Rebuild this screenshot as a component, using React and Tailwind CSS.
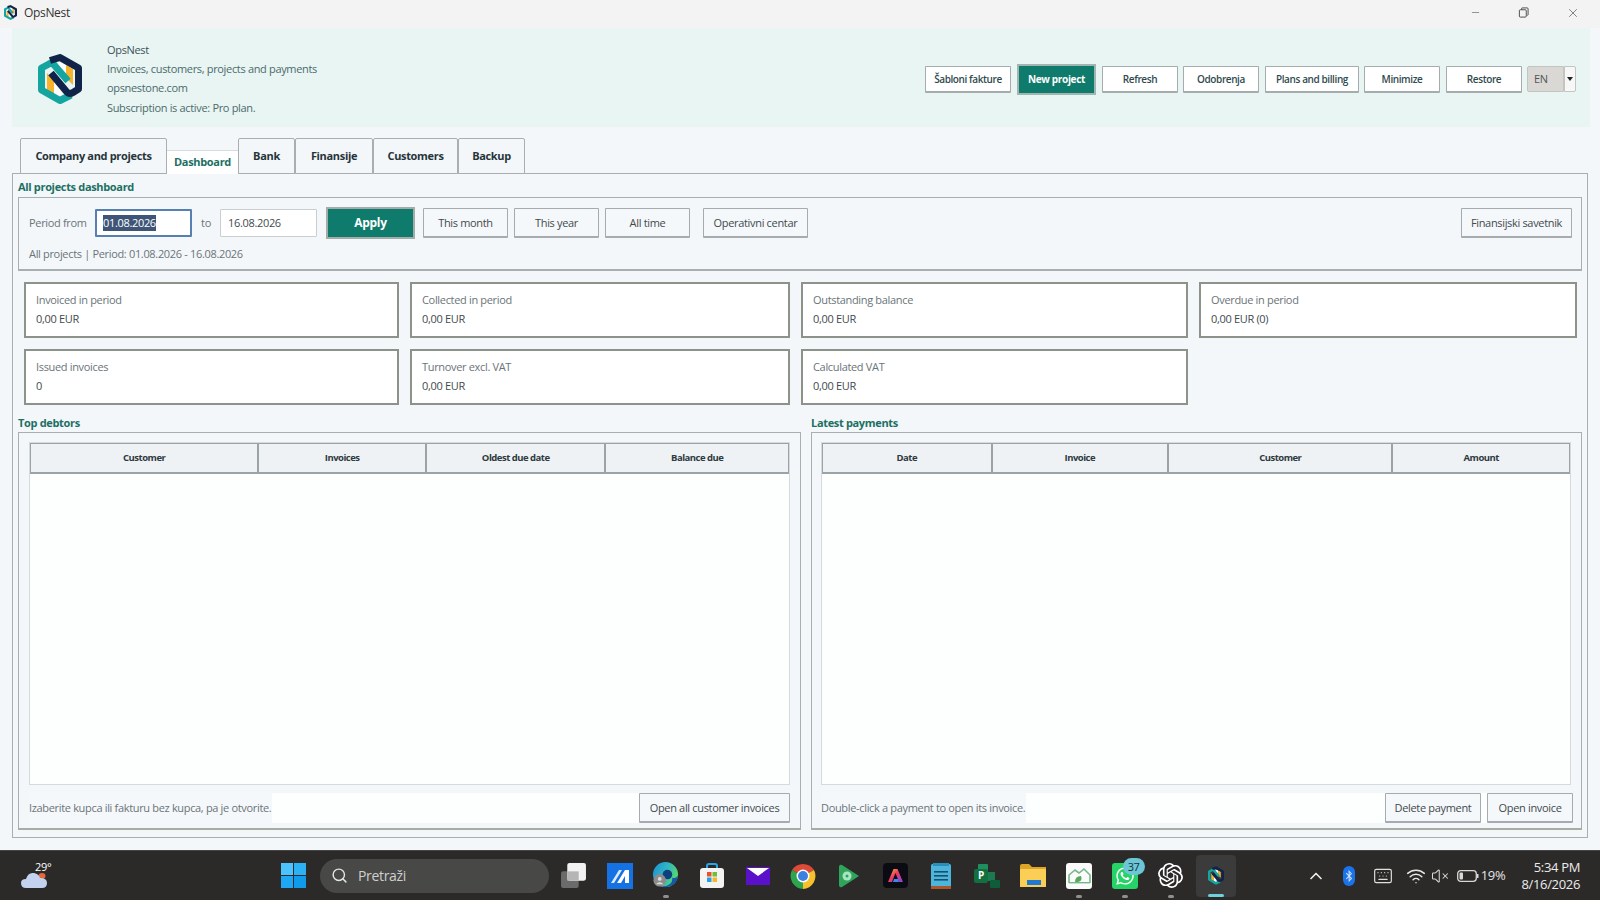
import React from 'react';
import { Search, ChevronUp, Wifi, VolumeX, Keyboard, Minus, X } from 'lucide-react';
import { SiOpenai } from 'react-icons/si';
import { FaWhatsapp, FaBluetoothB } from 'react-icons/fa';

const font = { fontFamily: '"Open Sans", "Liberation Sans", sans-serif' };

const Logo = ({ className }) => (
  <svg viewBox="0 0 44 50" className={className}>
    <polygon points="28,11 35,15 35,31 28,24" fill="#f7b32b" />
    <polygon points="9,19 16,27 16,41 9,37" fill="#f7b32b" />
    <polygon points="16,27 24,36 24,44 16,41" fill="#ffffff" />
    <polygon points="20,8 28,11 28,24 20,15" fill="#ffffff" />
    <path d="M33 41 L22 46.500 L3.500 36 L3.500 14 L11 10 Q14 8 17 12 L30 27" fill="none" stroke="#14a5a0" strokeWidth="7" strokeLinejoin="round" />
    <path d="M12 6.500 L22 3.500 L40.500 14 L40.500 35 L35 38.500 Q31 41 28 37 L13 19" fill="none" stroke="#10244a" strokeWidth="7" strokeLinejoin="round" />
  </svg>
);

const TaskView = () => (
  <svg viewBox="0 0 26 26" className="w-[27px] h-[27px]">
    <rect x="1" y="9" width="17" height="16" rx="2" fill="#6b6b6b" />
    <rect x="7" y="1" width="18" height="17" rx="2" fill="#f2f2f2" />
    <rect x="7" y="9" width="11" height="9" fill="#b5b5b5" />
  </svg>
);

const BlueApp = () => (
  <svg viewBox="0 0 26 26" className="w-[26px] h-[26px]">
    <rect width="26" height="26" fill="#1472e4" />
    <polygon points="4,20 12,7 15,7 7,20" fill="#dbeafe" />
    <polygon points="10,20 18,7 22,7 22,20 18,20 18,13 14,20" fill="#ffffff" />
  </svg>
);

const Edge = () => (
  <svg viewBox="0 0 28 28" className="w-[27px] h-[27px]">
    <defs>
      <linearGradient id="edgeG" x1="0" y1="0" x2="1" y2="0.4">
        <stop offset="0" stopColor="#1c8fd6" />
        <stop offset="0.55" stopColor="#2fb5c4" />
        <stop offset="1" stopColor="#56d66f" />
      </linearGradient>
    </defs>
    <circle cx="14" cy="13" r="13" fill="url(#edgeG)" />
    <path d="M27 14 A13 13 0 0 1 10 25.500 Q22 25 21 16 Q24 18 27 14 Z" fill="#1557a8" />
    <circle cx="16" cy="13" r="5" fill="#0f3f7e" />
    <circle cx="8" cy="19" r="6.500" fill="#8c8c8c" />
    <circle cx="8" cy="17.500" r="2" fill="#dcdcdc" />
    <path d="M4 23 Q8 19 12 23" fill="#dcdcdc" />
  </svg>
);

const Store = () => (
  <svg viewBox="0 0 26 26" className="w-[26px] h-[26px]">
    <path d="M8 6 V3 Q8 1 10 1 H16 Q18 1 18 3 V6" fill="none" stroke="#2aa5e6" strokeWidth="2" />
    <rect x="1" y="5" width="24" height="20" rx="3" fill="#f3f3f3" />
    <rect x="8" y="9" width="4.5" height="4.5" fill="#e8512c" />
    <rect x="13.5" y="9" width="4.5" height="4.5" fill="#6fbe3a" />
    <rect x="8" y="14.5" width="4.5" height="4.5" fill="#2a9fe0" />
    <rect x="13.5" y="14.5" width="4.5" height="4.5" fill="#f5b82a" />
  </svg>
);

const Mail = () => (
  <svg viewBox="0 0 24 18" className="w-[24px] h-[18px]">
    <rect width="24" height="18" fill="#5a11c9" />
    <polygon points="1,1 23,1 12,9" fill="#ffffff" />
  </svg>
);

const Chrome = () => (
  <svg viewBox="0 0 26 26" className="w-[26px] h-[26px]">
    <path d="M13 13 L2 7 A13 13 0 0 1 24 7 Z" fill="#dd4a38" />
    <path d="M13 13 L24 7 A13 13 0 0 1 13 26 Z" fill="#f6c12d" />
    <path d="M13 13 L13 26 A13 13 0 0 1 2 7 Z" fill="#2ea44f" />
    <circle cx="13" cy="13" r="6.5" fill="#ffffff" />
    <circle cx="13" cy="13" r="5" fill="#3b82e0" />
  </svg>
);

const PlayGames = () => (
  <svg viewBox="0 0 22 24" className="w-[22px] h-[24px]">
    <path d="M1 3 Q1 0 4 1 L21 12 L4 23 Q1 24 1 21 Z" fill="#2fa55c" />
    <circle cx="9" cy="12" r="4.5" fill="#a8e6c1" />
    <circle cx="9" cy="12" r="1.5" fill="#2fa55c" />
  </svg>
);

const AdobeApp = () => (
  <svg viewBox="0 0 25 25" className="w-[25px] h-[25px]">
    <defs>
      <linearGradient id="adobeG" x1="0" y1="0" x2="1" y2="1">
        <stop offset="0" stopColor="#f5c02f" />
        <stop offset="0.45" stopColor="#ef3a5d" />
        <stop offset="1" stopColor="#7a4be8" />
      </linearGradient>
    </defs>
    <rect width="25" height="25" rx="4" fill="#0b0b14" />
    <path d="M10.5 6 H14.5 L20 19 H16 L12.5 10 L9 19 H5 Z" fill="url(#adobeG)" />
    <polygon points="11,16 15,16 16,19 10,19" fill="#3f86ef" />
  </svg>
);

const Notepad = () => (
  <svg viewBox="0 0 20 26" className="w-[20px] h-[26px]">
    <rect y="1" width="20" height="25" rx="1.5" fill="#4db4dc" />
    <rect y="23" width="20" height="3" fill="#a8562a" />
    <rect x="3" y="8" width="14" height="1.6" fill="#15506e" />
    <rect x="3" y="12" width="14" height="1.6" fill="#15506e" />
    <rect x="3" y="16" width="14" height="1.6" fill="#15506e" />
    <rect x="2" y="0" width="16" height="3" fill="#2a8fb8" />
  </svg>
);

const ProjectApp = () => (
  <div className="relative w-[26px] h-[24px]">
    <div className="absolute left-[4px] top-0 w-[10px] h-[11px] bg-[#1f8f5f] rounded-[1px]" />
    <div className="absolute left-[12px] top-[8px] w-[9px] h-[9px] bg-[#1b7a50]" />
    <div className="absolute left-[16px] top-[16px] w-[10px] h-[8px] bg-[#0f5c3a] rounded-[1px]" />
    <div className="absolute left-0 top-[5px] w-[14px] h-[14px] bg-[#10703f] rounded-[2px] text-white text-[10px] font-bold flex items-center justify-center">P</div>
  </div>
);

const Folder = () => (
  <svg viewBox="0 0 26 23" className="w-[26px] h-[23px]">
    <path d="M0 2 Q0 0 2 0 H9 L12 3 H26 V23 H0 Z" fill="#e0a526" />
    <rect y="5" width="26" height="18" rx="1" fill="#fbcf55" />
    <rect x="7" y="16" width="14" height="5" fill="#1f78d1" />
  </svg>
);

const HouseApp = () => (
  <svg viewBox="0 0 26 26" className="w-[26px] h-[26px]">
    <rect width="26" height="26" rx="3" fill="#fbfbfb" />
    <path d="M3 20 V12 L9 7 L13 10 L18 6 L24 12 V20" fill="none" stroke="#74b98a" strokeWidth="1.6" />
    <path d="M9 19 Q9 13 15 13 Q17 18 12 19 Z" fill="#5aa85f" />
    <rect x="3" y="19" width="21" height="1.4" fill="#74b98a" />
  </svg>
);

const Whatsapp = () => (
  <div className="relative w-[26px] h-[26px] bg-[#25d366] rounded-[3px] flex items-center justify-center">
    <FaWhatsapp className="text-white text-[20px]" />
    <div className="absolute -top-[5px] left-[11px] w-[22px] h-[17px] rounded-full bg-[#6cc6d6] text-[#15303a] text-[11px] leading-[17px] text-center">37</div>
  </div>
);

const apps = [
  { id: 'task', icon: <TaskView /> },
  { id: 'blue', icon: <BlueApp /> },
  { id: 'edge', icon: <Edge />, dot: true },
  { id: 'store', icon: <Store /> },
  { id: 'mail', icon: <Mail /> },
  { id: 'chrome', icon: <Chrome /> },
  { id: 'play', icon: <PlayGames /> },
  { id: 'adobe', icon: <AdobeApp /> },
  { id: 'notes', icon: <Notepad /> },
  { id: 'project', icon: <ProjectApp /> },
  { id: 'folder', icon: <Folder /> },
  { id: 'house', icon: <HouseApp />, dot: true },
  { id: 'whatsapp', icon: <Whatsapp />, dot: true },
  { id: 'openai', icon: <SiOpenai className="text-white text-[25px]" />, dot: true },
];

const tabs = [
  { label: 'Company and projects', w: 'w-[147px]' },
  { label: 'Dashboard', w: 'w-[71px]', active: true },
  { label: 'Bank', w: 'w-[57px]' },
  { label: 'Finansije', w: 'w-[78px]' },
  { label: 'Customers', w: 'w-[85px]' },
  { label: 'Backup', w: 'w-[67px]' },
];

const topButtons = [
  { label: 'Šabloni fakture', w: 'w-[86px]', m: 'ml-0' },
  { label: 'New project', w: 'w-[79px]', m: 'ml-[6px]', primary: true },
  { label: 'Refresh', w: 'w-[76px]', m: 'ml-[6px]' },
  { label: 'Odobrenja', w: 'w-[76px]', m: 'ml-[5px]' },
  { label: 'Plans and billing', w: 'w-[94px]', m: 'ml-[6px]' },
  { label: 'Minimize', w: 'w-[76px]', m: 'ml-[5px]' },
  { label: 'Restore', w: 'w-[76px]', m: 'ml-[6px]' },
];

const GrayButton = ({ className, children }) => (
  <button className={`h-[30px] pt-[1px] border border-[#a6abad] border-b-2 rounded-[1px] bg-[#f5f8fa] text-[11px] text-[#3f4a4e] shrink-0 ${className}`}>
    {children}
  </button>
);

const Card = ({ label, value }) => (
  <div className="h-[56px] border-2 border-[#8d928a] bg-white pl-[10px] flex flex-col">
    <span className="mt-[6px] h-[19px] leading-[19px] text-[11px] text-[#6b7478]">{label}</span>
    <span className="h-[19px] leading-[19px] text-[11px] text-[#3f4a4e]">{value}</span>
  </div>
);

const DataTable = ({ columns }) => (
  <div className="h-[343px] bg-[#fdfefe] border border-[#d5dadd] flex flex-col">
    <div className="flex h-[31px] shrink-0">
      {columns.map((col) => (
        <div key={col.label} className={`${col.w} h-full pt-[1px] bg-[#eef2f5] border border-[#9ba3a6] border-b-2 flex items-center justify-center text-[9.5px] tracking-[-0.5px] font-bold text-[#2e3a3f]`}>
          {col.label}
        </div>
      ))}
    </div>
  </div>
);

export default function App() {
  return (
    <div style={font} className="w-[1600px] h-[900px] bg-[#f3f7fa] flex flex-col overflow-hidden tracking-[-0.33px]">
      {/* Title bar */}
      <div className="h-[28px] pb-[3px] bg-[#f3f3f3] flex items-center shrink-0">
        <Logo className="ml-[4px] w-[13px] h-[15px]" />
        <span className="ml-[7px] text-[12px] text-[#333]">OpsNest</span>
        <Minus className="ml-auto mr-[37px] text-[#444]" size={11} strokeWidth={1.2} />
        <svg viewBox="0 0 12 12" className="w-[11px] h-[11px] mr-[37px] text-[#444]" fill="none" stroke="currentColor" strokeWidth="1">
          <rect x="1.5" y="3" width="7.5" height="8" rx="1" />
          <path d="M4 3 V1.5 Q4 1 4.5 1 H10 Q11 1 11 2 V8.5 Q11 9 10 9" />
        </svg>
        <X className="mr-[20px] text-[#444]" size={14} strokeWidth={1.1} />
      </div>

      {/* App header */}
      <div className="ml-[12px] w-[1578px] h-[99px] pt-[3px] bg-[#e8f5f3] flex items-center shrink-0">
        <Logo className="ml-[26px] w-[44px] h-[50px]" />
        <div className="ml-[25px] flex flex-col text-[11px] text-[#4c6a6a]">
          <span className="h-[18px] leading-[18px] text-[#3b5257]">OpsNest</span>
          <span className="h-[19px] leading-[19px]">Invoices, customers, projects and payments</span>
          <span className="h-[20px] leading-[20px]">opsnestone.com</span>
          <span className="h-[20px] leading-[20px]">Subscription is active: Pro plan.</span>
        </div>
        <div className="ml-auto mr-[14px] flex items-center">
          {topButtons.map((b) =>
            b.primary ? (
              <button key={b.label} className={`${b.w} ${b.m} h-[31px] bg-[#0f7b6c] border-2 border-[#a3b5b1] text-white text-[10px] font-bold shrink-0`}>
                {b.label}
              </button>
            ) : (
              <button key={b.label} className={`${b.w} ${b.m} h-[27px] pt-[1px] bg-white border border-[#a6abad] border-b-2 rounded-[1px] text-[10px] font-semibold tracking-[-0.4px] text-[#2f4a4e] shrink-0`}>
                {b.label}
              </button>
            )
          )}
          <div className="ml-[5px] w-[37px] h-[26px] bg-[#d9d8d5] border border-[#c4c4c0] rounded-l-[2px] flex items-center pl-[6px] text-[11px] text-[#555]">EN</div>
          <div className="w-[12px] h-[26px] bg-[#f7f7f7] border border-[#c4c4c0] rounded-r-[2px] flex items-center justify-center">
            <div className="w-0 h-0 border-l-[3.5px] border-r-[3.5px] border-t-[4px] border-l-transparent border-r-transparent border-t-[#222]" />
          </div>
        </div>
      </div>

      {/* Tabs */}
      <div className="mt-[12px] ml-[20px] h-[35px] flex items-end shrink-0 relative z-10 -mb-[1px]">
        {tabs.map((t) =>
          t.active ? (
            <div key={t.label} className={`${t.w} h-[24px] bg-white flex items-center justify-center text-[11px] font-bold text-[#1d6f63] border-t border-[#d7dcde]`}>
              {t.label}
            </div>
          ) : (
            <div key={t.label} className={`${t.w} h-[36px] bg-[#f3f7fa] border border-[#a9aeb0] rounded-t-[2px] flex items-center justify-center text-[11px] font-bold text-[#26343a]`}>
              {t.label}
            </div>
          )
        )}
      </div>

      {/* Dashboard pane */}
      <div className="ml-[12px] w-[1576px] h-[665px] border border-[#a9aeb0] px-[5px] shrink-0">
        <div className="mt-[3px] h-[20px] leading-[20px] text-[11px] font-bold text-[#1d6f63]">All projects dashboard</div>

        <div className="h-[74px] border border-[#a9aeb0] border-b-2 pl-[10px] pr-[9px] pt-[9px]">
          <div className="flex items-center h-[32px]">
            <span className="w-[66px] text-[11px] text-[#6b7478] shrink-0">Period from</span>
            <div className="w-[97px] h-[28px] bg-white border-2 border-[#5580b0] rounded-[1px] flex items-center pl-[6px] text-[11px] shrink-0">
              <span className="bg-[#3e5578] text-white leading-[16px]">01.08.2026</span>
            </div>
            <span className="w-[28px] text-center text-[11px] text-[#6b7478] shrink-0">to</span>
            <div className="w-[97px] h-[28px] bg-white border border-[#c9ced1] rounded-[1px] flex items-center pl-[7px] text-[11px] text-[#3f4a4e] shrink-0">16.08.2026</div>
            <button className="ml-[9px] w-[89px] h-[32px] bg-[#0f7b6c] border-2 border-[#a3aca8] text-white text-[12px] font-bold shrink-0">Apply</button>
            <GrayButton className="ml-[8px] w-[85px]">This month</GrayButton>
            <GrayButton className="ml-[6px] w-[85px]">This year</GrayButton>
            <GrayButton className="ml-[6px] w-[85px]">All time</GrayButton>
            <GrayButton className="ml-[13px] w-[105px]">Operativni centar</GrayButton>
            <GrayButton className="ml-auto w-[111px]">Finansijski savetnik</GrayButton>
          </div>
          <div className="mt-[5px] h-[20px] leading-[20px] text-[11px] text-[#6b7478]">All projects | Period: 01.08.2026 - 16.08.2026</div>
        </div>

        <div className="mt-[11px] ml-[6px] grid grid-cols-[375px_380px_387px_378px] gap-x-[11px] gap-y-[11px]">
          <Card label="Invoiced in period" value="0,00 EUR" />
          <Card label="Collected in period" value="0,00 EUR" />
          <Card label="Outstanding balance" value="0,00 EUR" />
          <Card label="Overdue in period" value="0,00 EUR (0)" />
          <Card label="Issued invoices" value="0" />
          <Card label="Turnover excl. VAT" value="0,00 EUR" />
          <Card label="Calculated VAT" value="0,00 EUR" />
        </div>

        <div className="mt-[8px] flex gap-[10px]">
          {/* Top debtors */}
          <div className="w-[783px] shrink-0">
            <div className="h-[19px] leading-[19px] text-[11px] font-bold text-[#1d6f63]">Top debtors</div>
            <div className="h-[398px] border border-[#a9aeb0] border-b-2 border-b-[#a7ada3] pl-[10px] pr-[10px] pt-[9px]">
              <DataTable
                columns={[
                  { label: 'Customer', w: 'w-[229px]' },
                  { label: 'Invoices', w: 'w-[168px]' },
                  { label: 'Oldest due date', w: 'w-[180px]' },
                  { label: 'Balance due', w: 'w-[184px]' },
                ]}
              />
              <div className="mt-[8px] h-[30px] bg-[#fdfefe] flex items-center">
                <span className="h-full bg-[#f5f8fb] pr-[1px] leading-[30px] text-[11px] text-[#6b7478]">Izaberite kupca ili fakturu bez kupca, pa je otvorite.</span>
                <GrayButton className="ml-auto w-[151px] text-[#2e3a3f]">Open all customer invoices</GrayButton>
              </div>
            </div>
          </div>

          {/* Latest payments */}
          <div className="w-[771px] shrink-0">
            <div className="h-[19px] leading-[19px] text-[11px] font-bold text-[#1d6f63]">Latest payments</div>
            <div className="h-[398px] border border-[#a9aeb0] border-b-2 border-b-[#a7ada3] pl-[9px] pr-[10px] pt-[9px]">
              <DataTable
                columns={[
                  { label: 'Date', w: 'w-[170px]' },
                  { label: 'Invoice', w: 'w-[177px]' },
                  { label: 'Customer', w: 'w-[225px]' },
                  { label: 'Amount', w: 'w-[178px]' },
                ]}
              />
              <div className="mt-[8px] h-[30px] bg-[#fdfefe] flex items-center">
                <span className="h-full bg-[#f5f8fb] pr-[1px] leading-[30px] text-[11px] text-[#6b7478]">Double-click a payment to open its invoice.</span>
                <GrayButton className="ml-auto w-[96px] text-[#2e3a3f]">Delete payment</GrayButton>
                <GrayButton className="ml-[6px] -mr-[2px] w-[86px] text-[#2e3a3f]">Open invoice</GrayButton>
              </div>
            </div>
          </div>
        </div>
      </div>

      {/* Taskbar */}
      <div className="mt-[12px] h-[50px] bg-[#2b2a29] border-t border-[#454545] flex items-center shrink-0 text-white">
        <div className="ml-[20px] w-[32px] h-[36px] relative shrink-0">
          <svg viewBox="0 0 26 17" className="absolute left-[1px] bottom-[6px] w-[26px] h-[17px]">
            <ellipse cx="21" cy="5" rx="3.5" ry="3" fill="#e4683c" />
            <path d="M5 17 Q0 17 0 12 Q0 8 5 8 Q7 1 13 2 Q18 3 19 7 Q26 7 26 12 Q26 17 21 17 Z" fill="#c3d3ef" />
          </svg>
          <span className="absolute left-[15px] top-[3px] text-[11px] leading-[11px]">29°</span>
        </div>

        <svg viewBox="0 0 25 25" className="ml-[229px] w-[25px] h-[25px] shrink-0">
          <rect width="12" height="12" fill="#4cc2ff" />
          <rect x="13" width="12" height="12" fill="#2cb1f5" />
          <rect y="13" width="12" height="12" fill="#1ea7f2" />
          <rect x="13" y="13" width="12" height="12" fill="#0f9aec" />
        </svg>

        <div className="ml-[14px] w-[229px] h-[34px] rounded-full bg-[#484846] flex items-center pl-[11px] shrink-0">
          <Search className="text-[#e6e6e6]" size={17} strokeWidth={2} />
          <span className="ml-[10px] text-[14px] text-[#cfcfcf]">Pretraži</span>
        </div>

        <div className="ml-[2px] flex items-center h-full shrink-0">
          {apps.map((a) => (
            <div key={a.id} className="relative w-[45.9px] h-full flex items-center justify-center">
              {a.icon}
              {a.dot && <div className="absolute bottom-[2px] left-[20px] w-[6px] h-[3px] rounded-full bg-[#8f8f8f]" />}
            </div>
          ))}
          <div className="relative w-[40px] h-[42px] ml-[3px] rounded-[4px] bg-[#3b3b3b] flex items-center justify-center">
            <Logo className="w-[16px] h-[19px]" />
            <div className="absolute bottom-0 left-[12px] w-[16px] h-[3px] rounded-full bg-[#6fd0de]" />
          </div>
        </div>

        <div className="ml-auto flex items-center h-full shrink-0 pr-[20px]">
          <ChevronUp className="text-[#ececec]" size={20} strokeWidth={2} />
          <div className="ml-[17px] w-[12px] h-[20px] rounded-full bg-[#1a73e8] flex items-center justify-center">
            <FaBluetoothB className="text-[#d6e6ff] text-[12px]" />
          </div>
          <Keyboard className="ml-[18px] text-[#e0e0e0]" size={20} strokeWidth={1.4} />
          <Wifi className="ml-[13px] text-[#e6e6e6]" size={20} strokeWidth={1.8} />
          <VolumeX className="ml-[5px] text-[#d8d8d8]" size={18} strokeWidth={1.4} />
          <svg viewBox="0 0 22 12" className="ml-[8px] w-[22px] h-[12px]" fill="none">
            <rect x="0.7" y="0.7" width="18.6" height="10.6" rx="3" stroke="#d8d8d8" strokeWidth="1.3" />
            <rect x="2.5" y="2.5" width="3.5" height="7" rx="1" fill="#d8d8d8" />
            <rect x="20" y="4" width="1.5" height="4" fill="#d8d8d8" />
          </svg>
          <span className="ml-[2px] text-[13px] text-[#e6e6e6]">19%</span>
          <div className="ml-[16px] flex flex-col items-end text-[13px] leading-[17px] text-[#ececec]">
            <span>5:34 PM</span>
            <span>8/16/2026</span>
          </div>
        </div>
      </div>
    </div>
  );
}
